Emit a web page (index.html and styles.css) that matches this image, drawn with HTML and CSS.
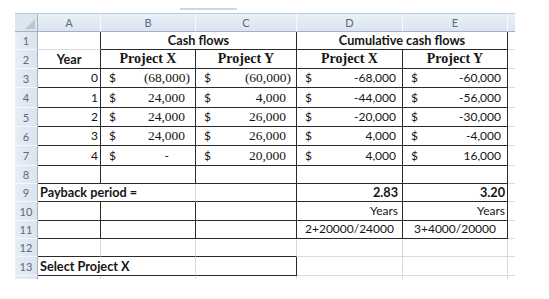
FILE: index.html
```html
<!DOCTYPE html>
<html>
<head>
<meta charset="utf-8">
<link rel="stylesheet" href="styles.css">
</head>
<body>
<div class="wrap">
  <div class="topbar"></div>
  <div class="sheet">
    <!-- header row -->
    <div class="hd corner"><span class="tri"></span></div>
    <div class="hd">A</div>
    <div class="hd">B</div>
    <div class="hd">C</div>
    <div class="hd">D</div>
    <div class="hd">E</div>
    <div class="hd fcol"></div>

    <!-- row 1 -->
    <div class="rh">1</div>
    <div class="c R"></div>
    <div class="c R B span2 ctr bold">Cash flows</div>
    <div class="c R B span2 ctr bold">Cumulative cash flows</div>
    <div class="c f"></div>

    <!-- row 2 -->
    <div class="rh">2</div>
    <div class="c R B ctr bold">Year</div>
    <div class="c R B ctr serifb">Project X</div>
    <div class="c R B ctr serifb">Project Y</div>
    <div class="c R B ctr serifb">Project X</div>
    <div class="c R B ctr serifb">Project Y</div>
    <div class="c f"></div>

    <!-- row 3 -->
    <div class="rh">3</div>
    <div class="c R B rt">0</div>
    <div class="c R B acc sf"><span class="d">$</span><span class="neg">(68,000)</span></div>
    <div class="c R B acc sf"><span class="d">$</span><span class="neg">(60,000)</span></div>
    <div class="c R B acc"><span class="d">$</span><span class="sn">-68,000</span></div>
    <div class="c R B acc"><span class="d">$</span><span class="sn">-60,000</span></div>
    <div class="c f"></div>

    <!-- row 4 -->
    <div class="rh">4</div>
    <div class="c R B rt">1</div>
    <div class="c R B acc sf"><span class="d">$</span><span class="pos">24,000</span></div>
    <div class="c R B acc sf"><span class="d">$</span><span class="pos">4,000</span></div>
    <div class="c R B acc"><span class="d">$</span><span class="sn">-44,000</span></div>
    <div class="c R B acc"><span class="d">$</span><span class="sn">-56,000</span></div>
    <div class="c f"></div>

    <!-- row 5 -->
    <div class="rh">5</div>
    <div class="c R B rt">2</div>
    <div class="c R B acc sf"><span class="d">$</span><span class="pos">24,000</span></div>
    <div class="c R B acc sf"><span class="d">$</span><span class="pos">26,000</span></div>
    <div class="c R B acc"><span class="d">$</span><span class="sn">-20,000</span></div>
    <div class="c R B acc"><span class="d">$</span><span class="sn">-30,000</span></div>
    <div class="c f"></div>

    <!-- row 6 -->
    <div class="rh">6</div>
    <div class="c R B rt">3</div>
    <div class="c R B acc sf"><span class="d">$</span><span class="pos">24,000</span></div>
    <div class="c R B acc sf"><span class="d">$</span><span class="pos">26,000</span></div>
    <div class="c R B acc"><span class="d">$</span><span class="sn">4,000</span></div>
    <div class="c R B acc"><span class="d">$</span><span class="sn">-4,000</span></div>
    <div class="c f"></div>

    <!-- row 7 -->
    <div class="rh">7</div>
    <div class="c R B rt">4</div>
    <div class="c R B acc"><span class="d">$</span><span class="zero">-</span></div>
    <div class="c R B acc sf"><span class="d">$</span><span class="pos">20,000</span></div>
    <div class="c R B acc"><span class="d">$</span><span class="sn">4,000</span></div>
    <div class="c R B acc"><span class="d">$</span><span class="sn">16,000</span></div>
    <div class="c f"></div>

    <!-- row 8 -->
    <div class="rh">8</div>
    <div class="c R B"></div>
    <div class="c R B"></div>
    <div class="c R B"></div>
    <div class="c R B"></div>
    <div class="c R B"></div>
    <div class="c f"></div>

    <!-- row 9 -->
    <div class="rh">9</div>
    <div class="c B span2 bold lt">Payback period =</div>
    <div class="c R B"></div>
    <div class="c R B rt bold pr">2.83</div>
    <div class="c R B rt bold pr2">3.20</div>
    <div class="c f"></div>

    <!-- row 10 -->
    <div class="rh">10</div>
    <div class="c R B"></div>
    <div class="c R B"></div>
    <div class="c R B"></div>
    <div class="c R B rt pr">Years</div>
    <div class="c R B rt pr2">Years</div>
    <div class="c f"></div>

    <!-- row 11 -->
    <div class="rh">11</div>
    <div class="c R B"></div>
    <div class="c R B"></div>
    <div class="c R B"></div>
    <div class="c R B ctr">2+20000/24000</div>
    <div class="c R B ctr">3+4000/20000</div>
    <div class="c f"></div>

    <!-- row 12 -->
    <div class="rh">12</div>
    <div class="c B"></div>
    <div class="c B"></div>
    <div class="c B"></div>
    <div class="c"></div>
    <div class="c"></div>
    <div class="c f"></div>

    <!-- row 13 -->
    <div class="rh">13</div>
    <div class="c B span2 bold lt">Select Project X</div>
    <div class="c R B"></div>
    <div class="c"></div>
    <div class="c"></div>
    <div class="c f"></div>

    <!-- partial row 14 -->
    <div class="rh last"></div>
    <div class="c nb"></div>
    <div class="c nb"></div>
    <div class="c nb"></div>
    <div class="c nb"></div>
    <div class="c nb"></div>
    <div class="c nb f"></div>
  </div>
</div>
</body>
</html>
```
FILE: styles.css
```css
html, body {
  margin: 0;
  padding: 0;
  background: #ffffff;
}

.wrap {
  position: relative;
  padding: 13px 0 0 15px;
  width: 549px;
  height: 299px;
  box-sizing: border-box;
}

.topbar {
  position: absolute;
  left: 180px;
  top: 8px;
  width: 57px;
  height: 2px;
  background: #c7d8ec;
}

.sheet {
  display: grid;
  grid-template-columns: 23px 63px 95px 101px 106px 105px 7px;
  grid-template-rows: 19px 18px 19px 19px 20px 19px 19px 20px 18px 18px 19px 18px 18px 19px 3px;
  font-family: Lato, "Liberation Sans", sans-serif;
  font-size: 12px;
  color: #151515;
}

.hd {
  background: linear-gradient(#eaf0f7, #dbe4ef);
  border-top: 1px solid #b9c9db;
  border-right: 1px solid #f4f7fb;
  border-bottom: 1px solid #9fb2c8;
  box-sizing: border-box;
  color: #586a84;
  font-size: 11px;
  display: flex;
  align-items: center;
  justify-content: center;
}

.corner {
  position: relative;
  background: #dde5ef;
  border-right: 1px solid #9fb2c8;
}

.tri {
  position: absolute;
  right: 2px;
  bottom: 2px;
  width: 0;
  height: 0;
  border-left: 10px solid transparent;
  border-bottom: 10px solid #bcc8d8;
}

.fcol {
  border-right: none;
}

.rh {
  background: linear-gradient(90deg, #e6edf5, #dbe4ef);
  border-right: 1px solid #9fb2c8;
  border-bottom: 1px solid #f4f7fb;
  box-sizing: border-box;
  color: #586a84;
  font-size: 11px;
  display: flex;
  align-items: center;
  justify-content: center;
}

.rh.last {
  border-bottom: none;
}

.c {
  box-sizing: border-box;
  border-right: 1px solid #d5dce8;
  border-bottom: 1px solid #d5dce8;
  display: flex;
  align-items: flex-end;
  padding: 0 2px 2px 2px;
  line-height: 14px;
  white-space: nowrap;
  min-width: 0;
}

.c.R { border-right-color: #2a2a2a; }
.c.B { border-bottom-color: #2a2a2a; }
.c.nb { border-bottom: none; }
.c.f { border-right: none; }

.span2 { grid-column: span 2; }

.ctr { justify-content: center; }
.rt { justify-content: flex-end; }
.lt { justify-content: flex-start; padding-left: 2px; }

.bold { font-weight: 700; font-size: 12.7px; }

.serifb {
  font-family: "Liberation Serif", serif;
  font-weight: 700;
  font-size: 14px;
}

.pr { padding-right: 4px; }
.pr2 { padding-right: 2px; }

.acc {
  justify-content: space-between;
  padding-left: 8px;
}

.sf span.neg,
.sf span.pos {
  font-family: "Liberation Serif", serif;
  font-size: 13.5px;
}

.neg { padding-right: 3px; }
.pos { padding-right: 8px; }
.sn { padding-right: 4px; }
.zero { padding-right: 24px; }
```
